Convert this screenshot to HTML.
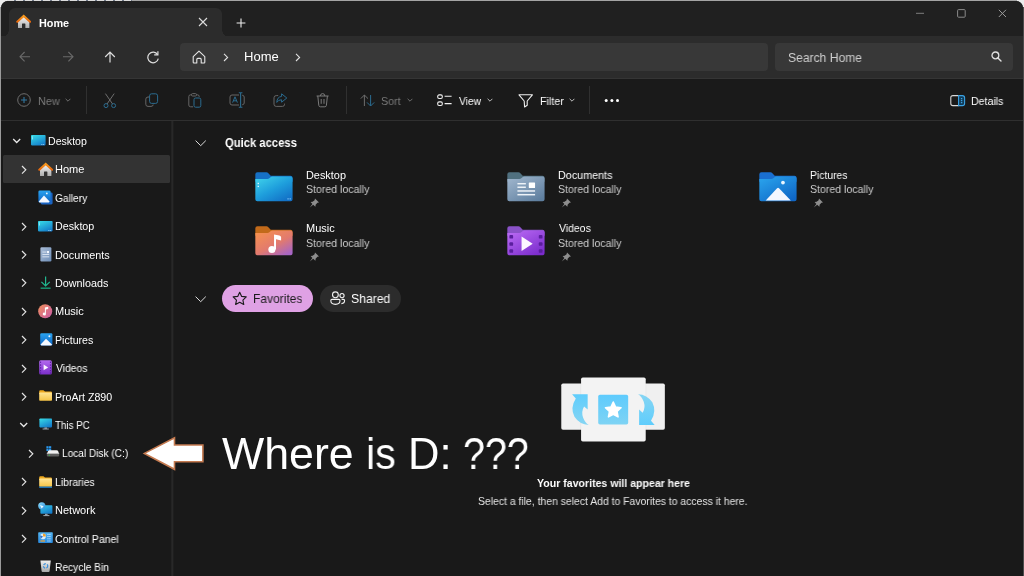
<!DOCTYPE html>
<html lang="en"><head><meta charset="utf-8"><title>Home - File Explorer</title>
<style>

*{margin:0;padding:0;box-sizing:border-box}
html,body{width:1024px;height:576px;overflow:hidden;background:#ececec;font-family:"Liberation Sans",sans-serif}
.abs,.t,svg.i{position:absolute}
.t{will-change:transform;white-space:nowrap;line-height:1em;display:block;transform-origin:0 0}
#win{position:absolute;left:1px;top:1px;width:1022px;height:590px;background:#191919;border-radius:7px 7px 0 0;overflow:hidden}
#titlebar{position:absolute;left:0;top:0;width:1022px;height:35px;background:#202020}
#tab{position:absolute;left:8px;top:7px;width:213px;height:29px;background:#2c2c2c;border-radius:6px 6px 0 0}
#tab:before,#tab:after{content:"";position:absolute;bottom:0;width:7px;height:7px}
#tab:before{left:-7px;background:radial-gradient(circle at 0 0,transparent 6.5px,#2c2c2c 7px)}
#tab:after{right:-7px;background:radial-gradient(circle at 100% 0,transparent 6.5px,#2c2c2c 7px)}
#nav{position:absolute;left:0;top:35px;width:1022px;height:43px;background:#2c2c2c;border-bottom:1px solid #353535}
#addr{position:absolute;left:179px;top:42px;width:588px;height:28px;background:#383838;border-radius:4px}
#search{position:absolute;left:774px;top:42px;width:238px;height:28px;background:#383838;border-radius:4px}
#toolbar{position:absolute;left:0;top:78px;width:1022px;height:42px;background:#1a1a1a;border-bottom:1px solid #2f2f2f}
.sep{position:absolute;top:85px;width:1px;height:28px;background:#303030}
#side{position:absolute;left:0;top:120px;width:170px;height:470px;background:#191919}
#div{position:absolute;left:170px;top:120px;width:3px;height:470px;background:linear-gradient(90deg,#232323 0,#232323 1px,#282828 1px,#282828 2px,#1e1e1e 2px)}
#sel{position:absolute;left:2.3px;top:154px;width:166.7px;height:27.8px;background:#333;border-radius:1.5px}
.pill{position:absolute;top:283.8px;height:27.5px;border-radius:14px}
#edgeL{position:absolute;left:0;top:7px;width:1px;height:569px;background:#9b9b9b}
#edgeT{position:absolute;left:7px;top:0;width:1010px;height:1px;background:linear-gradient(90deg,rgba(0,0,0,0) 0,rgba(0,0,0,0) 125px,#a4a4a4 125px),repeating-linear-gradient(90deg,#dcdcdc 0,#dcdcdc 7px,#6d7686 7px,#6d7686 9px)}
#edgeR{position:absolute;left:1023px;top:7px;width:1px;height:569px;background:#4c4c4c}

</style></head>
<body>
<div id="win">
<div id="titlebar"></div><div id="tab"></div><div id="nav"></div>
<div id="addr"></div><div id="search"></div>
<div id="toolbar"></div>
<div class="sep" style="left:85px"></div><div class="sep" style="left:345px"></div><div class="sep" style="left:588px"></div>
<div id="side"></div><div id="div"></div><div id="sel"></div>
<div class="pill" style="left:220.5px;width:91.7px;background:#dfa1e4"></div>
<div class="pill" style="left:319px;width:81.2px;background:#2c2c2c"></div>
</div>
<div id="edgeL"></div><div id="edgeT"></div><div id="edgeR"></div>
<div id="icons">
<svg class="i" style="left:16px;top:14px" width="15.4" height="15.0" viewBox="0 0 15.4 15" ><defs><linearGradient id="hg174" x1="0" y1="0" x2="0" y2="1"><stop offset="0" stop-color="#f4f4f4"/><stop offset="1" stop-color="#adadad"/></linearGradient><linearGradient id="hr174" x1="0" y1="0" x2="0" y2="1"><stop offset="0" stop-color="#f79a1e"/><stop offset="1" stop-color="#e9680c"/></linearGradient></defs><path d="M2 7.4 L7.7 2.4 L13.4 7.4 V13.5 Q13.4 14.1 12.8 14.1 H9.4 V9.9 Q9.4 9.4 8.9 9.4 H6.5 Q6 9.4 6 9.9 V14.1 H2.6 Q2 14.1 2 13.5 Z" fill="url(#hg174)"/><path d="M1.3 7.7 L7.7 1.9 L14.1 7.7" fill="none" stroke="url(#hr174)" stroke-width="2.1" stroke-linecap="round" stroke-linejoin="miter"/></svg>
<svg class="i" style="left:198px;top:17px" width="10" height="10" viewBox="0 0 10 10" ><path d="M1 1 L9 9 M9 1 L1 9" stroke="#dcdcdc" stroke-width="1.1" fill="none"/></svg>
<svg class="i" style="left:236px;top:18px" width="10" height="10" viewBox="0 0 10 10" ><path d="M5 0.6 V9.4 M0.6 5 H9.4" stroke="#ededed" stroke-width="1.1" fill="none"/></svg>
<svg class="i" style="left:916px;top:12px" width="9" height="3" viewBox="0 0 9 3" ><path d="M0 1.3 H8" stroke="#7d7d7d" stroke-width="1"/></svg>
<svg class="i" style="left:957px;top:9px" width="9" height="9" viewBox="0 0 9 9" ><rect x="0.6" y="0.6" width="7.6" height="7.6" rx="0.9" fill="none" stroke="#8a8a8a" stroke-width="1"/></svg>
<svg class="i" style="left:998px;top:9px" width="9" height="9" viewBox="0 0 9 9" ><path d="M0.8 0.8 L8 8 M8 0.8 L0.8 8" stroke="#9a9a9a" stroke-width="1" fill="none"/></svg>
<svg class="i" style="left:19px;top:51px" width="12" height="12" viewBox="0 0 12 12" ><path d="M11 5.7 H1.2 M5.6 1 L1 5.7 L5.6 10.4" fill="none" stroke="#6a6a6a" stroke-width="1.1"/></svg>
<svg class="i" style="left:62px;top:51px" width="12" height="12" viewBox="0 0 12 12" ><path d="M1 5.7 H10.8 M6.4 1 L11 5.7 L6.4 10.4" fill="none" stroke="#6a6a6a" stroke-width="1.1"/></svg>
<svg class="i" style="left:104px;top:51px" width="12" height="12" viewBox="0 0 12 12" ><path d="M6 11.4 V1.4 M1.2 6 L6 1.2 L10.8 6" fill="none" stroke="#dedede" stroke-width="1.2"/></svg>
<svg class="i" style="left:146px;top:50px" width="14" height="14" viewBox="0 0 14 14" ><path d="M11.6 4.6 A5.3 5.3 0 1 0 12.3 8.6" fill="none" stroke="#dedede" stroke-width="1.2"/><path d="M11.9 1.2 V4.9 H8.2" fill="none" stroke="#dedede" stroke-width="1.2"/></svg>
<svg class="i" style="left:192px;top:50px" width="14" height="14" viewBox="0 0 14 14" ><path d="M1.2 6.6 L7 1.2 L12.8 6.6 V12.2 Q12.8 13 12 13 H9.2 V9.4 Q9.2 8.4 8.2 8.4 H5.8 Q4.8 8.4 4.8 9.4 V13 H2 Q1.2 13 1.2 12.2 Z" fill="none" stroke="#e6e6e6" stroke-width="1.1" stroke-linejoin="round"/></svg>
<svg class="i" style="left:223px;top:53px" width="6" height="9" viewBox="0 0 6 9" ><path d="M1 0.8 L4.6 4.4 L1 8" fill="none" stroke="#e2e2e2" stroke-width="1.1"/></svg>
<svg class="i" style="left:295px;top:53px" width="6" height="9" viewBox="0 0 6 9" ><path d="M1 0.8 L4.6 4.4 L1 8" fill="none" stroke="#e2e2e2" stroke-width="1.1"/></svg>
<svg class="i" style="left:991px;top:51px" width="11" height="11" viewBox="0 0 11 11" ><circle cx="4.4" cy="4.4" r="3.4" fill="none" stroke="#e0e0e0" stroke-width="1.3"/><path d="M6.9 6.9 L10 10" stroke="#e0e0e0" stroke-width="1.4" stroke-linecap="round"/></svg>
<svg class="i" style="left:17px;top:93px" width="14" height="14" viewBox="0 0 14 14" ><circle cx="7" cy="7" r="6.3" fill="none" stroke="#6e6e6e" stroke-width="1"/><path d="M7 4 V10 M4 7 H10" stroke="#3277a0" stroke-width="1.1"/></svg>
<svg class="i" style="left:65px;top:98px" width="6" height="5" viewBox="0 0 6 5" ><path d="M0.6 0.8 L3 3.2 L5.4 0.8" fill="none" stroke="#6e6e6e" stroke-width="1"/></svg>
<svg class="i" style="left:103px;top:93px" width="14" height="16" viewBox="0 0 14 16" ><path d="M2.4 0.6 L9.6 11 M11.2 0.6 L4 11" stroke="#6e6e6e" stroke-width="1" fill="none"/><circle cx="3" cy="12.6" r="2" fill="none" stroke="#2b6c90" stroke-width="1"/><circle cx="10.6" cy="12.6" r="2" fill="none" stroke="#2b6c90" stroke-width="1"/></svg>
<svg class="i" style="left:145px;top:93px" width="14" height="15" viewBox="0 0 14 15" ><path d="M4.4 4 H3 Q0.8 4 0.8 6.2 V11.2 Q0.8 13.4 3 13.4 H6 Q8.2 13.4 8.2 11.6" fill="none" stroke="#666" stroke-width="1"/><rect x="4.6" y="0.8" width="8" height="9.6" rx="2" fill="none" stroke="#2b6c90" stroke-width="1"/></svg>
<svg class="i" style="left:188px;top:93px" width="14" height="16" viewBox="0 0 14 16" ><path d="M5 13.8 H2.6 Q0.8 13.8 0.8 12 V3.6 Q0.8 1.8 2.6 1.8 H3.4 M8.6 1.8 H9.4 Q11.2 1.8 11.2 3.6 V4" fill="none" stroke="#666" stroke-width="1"/><rect x="3.4" y="0.6" width="5.2" height="2.4" rx="1.2" fill="none" stroke="#666" stroke-width="1"/><rect x="6" y="5" width="6.8" height="9.2" rx="1.6" fill="none" stroke="#2b6c90" stroke-width="1"/></svg>
<svg class="i" style="left:229px;top:92px" width="16" height="16" viewBox="0 0 16 16" ><path d="M10 3 H3 Q1 3 1 5 V11 Q1 13 3 13 H10 M13.2 3.2 Q15.2 3.4 15.2 5 V11 Q15.2 12.6 13.2 12.8" fill="none" stroke="#666" stroke-width="1"/><path d="M11.6 0.8 V15.2 M9.8 0.8 H13.4 M9.8 15.2 H13.4" stroke="#2b6c90" stroke-width="1.1" fill="none"/><path d="M3.6 10.6 L6 4.8 L8.4 10.6 M4.4 8.8 H7.6" stroke="#2b6c90" stroke-width="1" fill="none"/></svg>
<svg class="i" style="left:273px;top:93px" width="15" height="15" viewBox="0 0 15 15" ><path d="M5.2 2.6 H3.2 Q1 2.6 1 4.8 V11.2 Q1 13.4 3.2 13.4 H9.4 Q11.6 13.4 11.6 11.2 V10.6" fill="none" stroke="#666" stroke-width="1"/><path d="M8.6 0.8 L13.8 5 L8.6 9.2 V6.8 Q5.4 6.6 3.8 9.4 Q4 4 8.6 3.4 Z" fill="none" stroke="#2b6c90" stroke-width="1" stroke-linejoin="round"/></svg>
<svg class="i" style="left:316px;top:93px" width="14" height="15" viewBox="0 0 14 15" ><path d="M0.6 3 H12.6 M4.4 3 Q4.4 0.6 6.6 0.6 Q8.8 0.6 8.8 3 M1.8 3 L2.8 12.4 Q3 13.8 4.4 13.8 H8.8 Q10.2 13.8 10.4 12.4 L11.4 3 M5.2 6 V10.8 M8 6 V10.8" fill="none" stroke="#7a7a7a" stroke-width="1"/></svg>
<svg class="i" style="left:360px;top:94px" width="16" height="13" viewBox="0 0 16 13" ><path d="M4.4 12 V1 M0.8 4.6 L4.4 1 L8 4.6" fill="none" stroke="#6e6e6e" stroke-width="1"/><path d="M10.6 1 V12 M7 8.4 L10.6 12 L14.2 8.4" fill="none" stroke="#2b6c90" stroke-width="1"/></svg>
<svg class="i" style="left:407px;top:98px" width="6" height="5" viewBox="0 0 6 5" ><path d="M0.6 0.8 L3 3.2 L5.4 0.8" fill="none" stroke="#6e6e6e" stroke-width="1"/></svg>
<svg class="i" style="left:437px;top:94px" width="16" height="13" viewBox="0 0 16 13" ><rect x="0.7" y="0.9" width="4.6" height="3.6" rx="1.4" fill="none" stroke="#f0f0f0" stroke-width="1.1"/><rect x="0.7" y="7.9" width="4.6" height="3.6" rx="1.4" fill="none" stroke="#f0f0f0" stroke-width="1.1"/><path d="M7.6 2.2 H14.6 M7.6 9.6 H14.6" stroke="#f0f0f0" stroke-width="1.1"/></svg>
<svg class="i" style="left:487px;top:98px" width="6" height="5" viewBox="0 0 6 5" ><path d="M0.6 0.8 L3 3.2 L5.4 0.8" fill="none" stroke="#bdbdbd" stroke-width="1"/></svg>
<svg class="i" style="left:518px;top:94px" width="16" height="14" viewBox="0 0 16 14" ><path d="M1 0.8 H14.4 L9.2 7 V11.2 L6.6 13 L6.2 7 Z" fill="none" stroke="#f0f0f0" stroke-width="1.1" stroke-linejoin="round"/></svg>
<svg class="i" style="left:569px;top:98px" width="6" height="5" viewBox="0 0 6 5" ><path d="M0.6 0.8 L3 3.2 L5.4 0.8" fill="none" stroke="#bdbdbd" stroke-width="1"/></svg>
<svg class="i" style="left:604px;top:99px" width="16" height="4" viewBox="0 0 16 4" ><circle cx="2.2" cy="1.6" r="1.5" fill="#fff"/><circle cx="7.9" cy="1.6" r="1.5" fill="#fff"/><circle cx="13.5" cy="1.6" r="1.5" fill="#fff"/></svg>
<svg class="i" style="left:950px;top:95px" width="16" height="12" viewBox="0 0 16 12" ><path d="M8.6 0.6 H3 Q0.8 0.6 0.8 2.8 V8.4 Q0.8 10.6 3 10.6 H8.6" fill="none" stroke="#d8d8d8" stroke-width="1.1"/><path d="M8.6 0.6 H12.4 Q14.6 0.6 14.6 2.8 V8.4 Q14.6 10.6 12.4 10.6 H8.6 Z" fill="#123a55" stroke="#3aa2e4" stroke-width="1.1"/><path d="M11.6 3 V8.2" stroke="#3aa2e4" stroke-width="1.4" stroke-dasharray="1.2 0.8"/></svg>
<svg class="i" style="left:12px;top:137.6px" width="10" height="6" viewBox="0 0 10 6" ><path d="M1.2 1 L4.7 4.5 L8.2 1" fill="none" stroke="#e8e8e8" stroke-width="1.3"/></svg>
<svg class="i" style="left:21px;top:164.8px" width="6" height="10" viewBox="0 0 6 10" ><path d="M1 1 L4.8 4.8 L1 8.6" fill="none" stroke="#e4e4e4" stroke-width="1.2"/></svg>
<svg class="i" style="left:21px;top:221.6px" width="6" height="10" viewBox="0 0 6 10" ><path d="M1 1 L4.8 4.8 L1 8.6" fill="none" stroke="#e4e4e4" stroke-width="1.2"/></svg>
<svg class="i" style="left:21px;top:250.0px" width="6" height="10" viewBox="0 0 6 10" ><path d="M1 1 L4.8 4.8 L1 8.6" fill="none" stroke="#e4e4e4" stroke-width="1.2"/></svg>
<svg class="i" style="left:21px;top:278.4px" width="6" height="10" viewBox="0 0 6 10" ><path d="M1 1 L4.8 4.8 L1 8.6" fill="none" stroke="#e4e4e4" stroke-width="1.2"/></svg>
<svg class="i" style="left:21px;top:306.79999999999995px" width="6" height="10" viewBox="0 0 6 10" ><path d="M1 1 L4.8 4.8 L1 8.6" fill="none" stroke="#e4e4e4" stroke-width="1.2"/></svg>
<svg class="i" style="left:21px;top:335.19999999999993px" width="6" height="10" viewBox="0 0 6 10" ><path d="M1 1 L4.8 4.8 L1 8.6" fill="none" stroke="#e4e4e4" stroke-width="1.2"/></svg>
<svg class="i" style="left:21px;top:363.59999999999997px" width="6" height="10" viewBox="0 0 6 10" ><path d="M1 1 L4.8 4.8 L1 8.6" fill="none" stroke="#e4e4e4" stroke-width="1.2"/></svg>
<svg class="i" style="left:21px;top:392.0px" width="6" height="10" viewBox="0 0 6 10" ><path d="M1 1 L4.8 4.8 L1 8.6" fill="none" stroke="#e4e4e4" stroke-width="1.2"/></svg>
<svg class="i" style="left:21px;top:477.19999999999993px" width="6" height="10" viewBox="0 0 6 10" ><path d="M1 1 L4.8 4.8 L1 8.6" fill="none" stroke="#e4e4e4" stroke-width="1.2"/></svg>
<svg class="i" style="left:21px;top:505.59999999999997px" width="6" height="10" viewBox="0 0 6 10" ><path d="M1 1 L4.8 4.8 L1 8.6" fill="none" stroke="#e4e4e4" stroke-width="1.2"/></svg>
<svg class="i" style="left:21px;top:533.9999999999999px" width="6" height="10" viewBox="0 0 6 10" ><path d="M1 1 L4.8 4.8 L1 8.6" fill="none" stroke="#e4e4e4" stroke-width="1.2"/></svg>
<svg class="i" style="left:18.8px;top:422.0px" width="10" height="6" viewBox="0 0 10 6" ><path d="M1.2 1 L4.7 4.5 L8.2 1" fill="none" stroke="#e8e8e8" stroke-width="1.3"/></svg>
<svg class="i" style="left:28px;top:448.79999999999995px" width="6" height="10" viewBox="0 0 6 10" ><path d="M1 1 L4.8 4.8 L1 8.6" fill="none" stroke="#e4e4e4" stroke-width="1.2"/></svg>
<svg class="i" style="left:31px;top:134.8px" width="15" height="11" viewBox="0 0 15 11" ><defs><linearGradient id="g1" x1="0.2" y1="0" x2="0.8" y2="1"><stop offset="0" stop-color="#35d6e6"/><stop offset="1" stop-color="#1277c8"/></linearGradient></defs><rect x="0" y="0" width="14.6" height="10.4" rx="0.8" fill="url(#g1)"/><rect x="1" y="1.6" width="0.9" height="0.9" fill="#dff"/><rect x="1" y="3.4" width="0.9" height="0.9" fill="#dff"/><rect x="10.4" y="9.2" width="1" height="0.8" fill="#bfe9ff"/><rect x="12.2" y="9.2" width="1" height="0.8" fill="#bfe9ff"/></svg>
<svg class="i" style="left:38px;top:161.6px" width="15.4" height="15.0" viewBox="0 0 15.4 15" ><defs><linearGradient id="hg541" x1="0" y1="0" x2="0" y2="1"><stop offset="0" stop-color="#f4f4f4"/><stop offset="1" stop-color="#adadad"/></linearGradient><linearGradient id="hr541" x1="0" y1="0" x2="0" y2="1"><stop offset="0" stop-color="#f79a1e"/><stop offset="1" stop-color="#e9680c"/></linearGradient></defs><path d="M2 7.4 L7.7 2.4 L13.4 7.4 V13.5 Q13.4 14.1 12.8 14.1 H9.4 V9.9 Q9.4 9.4 8.9 9.4 H6.5 Q6 9.4 6 9.9 V14.1 H2.6 Q2 14.1 2 13.5 Z" fill="url(#hg541)"/><path d="M1.3 7.7 L7.7 1.9 L14.1 7.7" fill="none" stroke="url(#hr541)" stroke-width="2.1" stroke-linecap="round" stroke-linejoin="miter"/></svg>
<svg class="i" style="left:38px;top:190px" width="15" height="15" viewBox="0 0 15 15" ><defs><linearGradient id="g2" x1="0" y1="0" x2="0" y2="1"><stop offset="0" stop-color="#2aa4f0"/><stop offset="1" stop-color="#0d63c4"/></linearGradient></defs><rect x="2.6" y="2.4" width="12" height="12" rx="1.4" fill="#1a62c0"/><rect x="0.4" y="0.4" width="12.2" height="12.2" rx="1.4" fill="url(#g2)"/><path d="M0.8 11.6 L6 5.6 L11.6 11.6 Q11.6 12.4 10.8 12.4 H1.6 Q0.8 12.4 0.8 11.6 Z" fill="#f4f8ff"/><circle cx="8.8" cy="3.4" r="0.9" fill="#e9f6ff"/></svg>
<svg class="i" style="left:38px;top:220.5px" width="15" height="11" viewBox="0 0 15 11" ><defs><linearGradient id="g3" x1="0.2" y1="0" x2="0.8" y2="1"><stop offset="0" stop-color="#35d6e6"/><stop offset="1" stop-color="#1277c8"/></linearGradient></defs><rect x="0" y="0" width="14.6" height="10.4" rx="0.8" fill="url(#g3)"/><rect x="1" y="1.6" width="0.9" height="0.9" fill="#dff"/><rect x="1" y="3.4" width="0.9" height="0.9" fill="#dff"/><rect x="10.4" y="9.2" width="1" height="0.8" fill="#bfe9ff"/><rect x="12.2" y="9.2" width="1" height="0.8" fill="#bfe9ff"/></svg>
<svg class="i" style="left:39.5px;top:247px" width="12" height="15" viewBox="0 0 12 15" ><defs><linearGradient id="g4" x1="0" y1="0" x2="1" y2="1"><stop offset="0" stop-color="#a9bcd6"/><stop offset="1" stop-color="#6f8fb8"/></linearGradient></defs><rect x="0.4" y="0.2" width="11" height="14.2" rx="1.2" fill="url(#g4)"/><rect x="2.4" y="4.6" width="3.6" height="0.9" fill="#dfe8f4"/><rect x="6.8" y="4" width="2.2" height="2.2" fill="#f4f8ff"/><rect x="2.4" y="7" width="6.8" height="0.9" fill="#dfe8f4"/><rect x="2.4" y="9.4" width="6.8" height="0.9" fill="#dfe8f4"/></svg>
<svg class="i" style="left:40px;top:276px" width="12" height="14" viewBox="0 0 12 14" ><path d="M5.6 0.4 V9.8 M1.4 5.8 L5.6 10 L9.8 5.8" fill="none" stroke="#21b890" stroke-width="1.2"/><path d="M0.6 12.2 H10.6" stroke="#17936f" stroke-width="1.5"/></svg>
<svg class="i" style="left:38px;top:304px" width="15" height="15" viewBox="0 0 15 15" ><defs><linearGradient id="g5" x1="0" y1="0" x2="1" y2="1"><stop offset="0" stop-color="#f0905a"/><stop offset="1" stop-color="#c95aa8"/></linearGradient></defs><circle cx="7.2" cy="7.2" r="7" fill="url(#g5)"/><path d="M6.9 9.9 V3.4 L10.2 2.8 V5 L7.9 5.5 V9.9 A1.6 1.5 0 1 1 6.9 8.7" fill="#fff"/></svg>
<svg class="i" style="left:39.5px;top:332.5px" width="13" height="13" viewBox="0 0 13 13" ><defs><linearGradient id="g6" x1="0" y1="0" x2="0" y2="1"><stop offset="0" stop-color="#2aa4f0"/><stop offset="1" stop-color="#0d63c4"/></linearGradient></defs><rect x="0.2" y="0.2" width="12.2" height="12.4" rx="1.3" fill="url(#g6)"/><path d="M0.6 11.6 L6 5.8 L12 11.6 Q12 12.4 11.2 12.4 H1.4 Q0.6 12.4 0.6 11.6 Z" fill="#f4f8ff"/><circle cx="9.4" cy="3.2" r="1" fill="#e9f6ff"/></svg>
<svg class="i" style="left:39px;top:360px" width="13" height="15" viewBox="0 0 13 15" ><defs><linearGradient id="g7" x1="0" y1="0" x2="0" y2="1"><stop offset="0" stop-color="#b46af0"/><stop offset="1" stop-color="#7a2ec8"/></linearGradient></defs><rect x="0.2" y="0.2" width="12.6" height="14.4" rx="1.5" fill="url(#g7)"/><path d="M4.6 4.6 L9.2 7.4 L4.6 10.2 Z" fill="#fbf4ff"/><rect x="1" y="1.6" width="1.1" height="1.3" fill="#5a1e9e"/><rect x="1" y="4.4" width="1.1" height="1.3" fill="#5a1e9e"/><rect x="1" y="7.2" width="1.1" height="1.3" fill="#5a1e9e"/><rect x="1" y="10" width="1.1" height="1.3" fill="#5a1e9e"/><rect x="1" y="12.4" width="1.1" height="1.3" fill="#5a1e9e"/><rect x="10.9" y="1.6" width="1.1" height="1.3" fill="#5a1e9e"/><rect x="10.9" y="4.4" width="1.1" height="1.3" fill="#5a1e9e"/><rect x="10.9" y="7.2" width="1.1" height="1.3" fill="#5a1e9e"/><rect x="10.9" y="10" width="1.1" height="1.3" fill="#5a1e9e"/><rect x="10.9" y="12.4" width="1.1" height="1.3" fill="#5a1e9e"/></svg>
<svg class="i" style="left:39px;top:390px" width="14" height="12" viewBox="0 0 14 12" ><defs><linearGradient id="g8" x1="0" y1="0" x2="0" y2="1"><stop offset="0" stop-color="#ffe494"/><stop offset="1" stop-color="#f6c445"/></linearGradient></defs><path d="M0.2 1.4 Q0.2 0.2 1.4 0.2 H4.4 L6 1.6 H11.8 Q13 1.6 13 2.8 V4 H0.2 Z" fill="#f0aa1e"/><rect x="0.2" y="2.6" width="12.8" height="8.2" rx="0.8" fill="url(#g8)"/></svg>
<svg class="i" style="left:39px;top:418px" width="14" height="13" viewBox="0 0 14 13" ><defs><linearGradient id="g9" x1="0.2" y1="0" x2="0.8" y2="1"><stop offset="0" stop-color="#35d6e6"/><stop offset="1" stop-color="#1277c8"/></linearGradient></defs><rect x="0.4" y="0.4" width="12.6" height="9" rx="0.8" fill="url(#g9)"/><path d="M5.4 9.4 H8 V10.8 H5.4 Z" fill="#8c98a4"/><path d="M3.6 11 H9.8" stroke="#aeb8c2" stroke-width="0.9"/></svg>
<svg class="i" style="left:45.5px;top:446px" width="14" height="11" viewBox="0 0 14 11" ><rect x="0.4" y="0.2" width="2.2" height="2.2" fill="#2a98ee"/><rect x="3" y="0.2" width="2.2" height="2.2" fill="#2a98ee"/><rect x="0.4" y="2.8" width="2.2" height="2.2" fill="#2a98ee"/><rect x="3" y="2.8" width="2.2" height="2.2" fill="#2a98ee"/><path d="M2 5.2 Q2.4 4.2 3.6 4.2 H10.6 Q11.8 4.2 12.2 5.2 L13 7.4 H1 Z" fill="#f1f1f1"/><rect x="0.8" y="7.2" width="12.4" height="3.2" rx="0.8" fill="#5e5e5e"/><rect x="0.8" y="7" width="12.4" height="0.9" fill="#c4c4c4"/><rect x="2.6" y="8.8" width="1.4" height="0.8" fill="#38c048"/></svg>
<svg class="i" style="left:39px;top:476px" width="14" height="12" viewBox="0 0 14 12" ><defs><linearGradient id="g10" x1="0" y1="0" x2="0" y2="1"><stop offset="0" stop-color="#ffe494"/><stop offset="1" stop-color="#f6c445"/></linearGradient></defs><path d="M0.2 1.4 Q0.2 0.2 1.4 0.2 H4.4 L6 1.6 H11.8 Q13 1.6 13 2.8 V4 H0.2 Z" fill="#f0aa1e"/><rect x="0.2" y="2.6" width="12.8" height="8.2" rx="0.8" fill="url(#g10)"/><rect x="0.2" y="10.6" width="12.8" height="1.2" fill="#2488d8"/></svg>
<svg class="i" style="left:38px;top:502px" width="15" height="15" viewBox="0 0 15 15" ><defs><linearGradient id="g11" x1="0.2" y1="0" x2="0.8" y2="1"><stop offset="0" stop-color="#35c6e6"/><stop offset="1" stop-color="#1277c8"/></linearGradient><linearGradient id="g12" x1="0" y1="0" x2="1" y2="1"><stop offset="0" stop-color="#8fe0ff"/><stop offset="1" stop-color="#2a8ad8"/></linearGradient></defs><rect x="2.4" y="3.2" width="12" height="8.6" rx="0.8" fill="url(#g11)"/><path d="M7 11.8 H9.6 V13.2 H7 Z" fill="#8c98a4"/><path d="M5.4 13.6 H11.4" stroke="#aeb8c2" stroke-width="0.9"/><circle cx="3.8" cy="3.8" r="3.6" fill="url(#g12)"/><path d="M2 3 L5.6 4.2 L3.6 6.4 Z" fill="#e8fbff"/></svg>
<svg class="i" style="left:38px;top:532px" width="15" height="12" viewBox="0 0 15 12" ><defs><linearGradient id="g13" x1="0" y1="0" x2="0" y2="1"><stop offset="0" stop-color="#52b4f0"/><stop offset="1" stop-color="#2a8ade"/></linearGradient></defs><rect x="0.2" y="0.2" width="14.6" height="10.8" rx="0.8" fill="url(#g13)"/><circle cx="5" cy="4.4" r="2.8" fill="#d8ecfa"/><path d="M5 4.4 V1.6 A2.8 2.8 0 0 1 7.8 4.4 Z" fill="#f2a02a"/><path d="M5 4.4 L3 6.4 A2.8 2.8 0 0 1 2.4 3.2 Z" fill="#2a70c8"/><rect x="2.4" y="8.4" width="4.6" height="1.2" fill="#f2a02a"/><path d="M9.4 2.4 H13 M9.4 4.6 H13 M9.4 6.8 H13 M9.4 9 H13" stroke="#dff0ff" stroke-width="0.9" stroke-dasharray="1.2 0.7"/></svg>
<svg class="i" style="left:40px;top:560px" width="12" height="13" viewBox="0 0 12 13" ><defs><linearGradient id="g14" x1="0" y1="0" x2="0" y2="1"><stop offset="0" stop-color="#f0f0f0"/><stop offset="1" stop-color="#a8a8a8"/></linearGradient></defs><path d="M0.4 0.4 H10.8 L9.6 11 Q9.5 12 8.6 12 H2.6 Q1.7 12 1.6 11 Z" fill="url(#g14)"/><circle cx="5.6" cy="6" r="2.2" fill="none" stroke="#2a8ae0" stroke-width="1.1" stroke-dasharray="2.4 1.2"/></svg>
<svg class="i" style="left:194.5px;top:139.8px" width="12" height="7" viewBox="0 0 12 7" ><path d="M0.6 0.6 L5.7 5.7 L10.8 0.6" fill="none" stroke="#dcdcdc" stroke-width="1"/></svg>
<svg class="i" style="left:194.5px;top:295.6px" width="12" height="7" viewBox="0 0 12 7" ><path d="M0.6 0.6 L5.7 5.7 L10.8 0.6" fill="none" stroke="#dcdcdc" stroke-width="1"/></svg>
<svg class="i" style="left:255.2px;top:171.9px" width="38.3" height="30.4" viewBox="0 0 39 31" ><defs><linearGradient id="g15" x1="0" y1="0" x2="0.8" y2="1"><stop offset="0" stop-color="#42d6ec"/><stop offset="0.55" stop-color="#1e9edc"/><stop offset="1" stop-color="#1270c6"/></linearGradient></defs><path d="M0.3 2.4 Q0.3 0.3 2.4 0.3 H11.6 Q12.8 0.3 13.6 1.2 L16 3.8 H36.2 Q38.3 3.8 38.3 5.9 V10 H0.3 Z" fill="#1670c4"/><path d="M0.3 7.2 H12.6 Q13.8 7.2 14.6 6.4 L15.8 5.4 Q16.6 4.6 17.8 4.6 H36.2 Q38.3 4.6 38.3 6.7 V27.8 Q38.3 29.9 36.2 29.9 H2.4 Q0.3 29.9 0.3 27.8 Z" fill="url(#g15)"/><rect x="2.6" y="11" width="1.4" height="1.4" fill="#dff8ff"/><rect x="2.6" y="14" width="1.4" height="1.4" fill="#dff8ff"/><rect x="33" y="27" width="1.4" height="0.9" fill="#9fdcff"/><rect x="35.2" y="27" width="1.4" height="0.9" fill="#9fdcff"/></svg>
<svg class="i" style="left:507.4px;top:171.9px" width="38.3" height="30.4" viewBox="0 0 39 31" ><defs><linearGradient id="g16" x1="0" y1="0" x2="0.8" y2="1"><stop offset="0" stop-color="#a2b8cf"/><stop offset="1" stop-color="#5f7f9f"/></linearGradient></defs><path d="M0.3 2.4 Q0.3 0.3 2.4 0.3 H11.6 Q12.8 0.3 13.6 1.2 L16 3.8 H36.2 Q38.3 3.8 38.3 5.9 V10 H0.3 Z" fill="#50707f"/><path d="M0.3 7.2 H12.6 Q13.8 7.2 14.6 6.4 L15.8 5.4 Q16.6 4.6 17.8 4.6 H36.2 Q38.3 4.6 38.3 6.7 V27.8 Q38.3 29.9 36.2 29.9 H2.4 Q0.3 29.9 0.3 27.8 Z" fill="url(#g16)"/><rect x="10.6" y="11.2" width="8.6" height="1.5" fill="#eef3f8"/><rect x="22.2" y="10.6" width="6.4" height="5.8" rx="0.6" fill="#fff"/><rect x="10.6" y="14.8" width="8.6" height="1.5" fill="#eef3f8"/><rect x="10.6" y="18.6" width="18" height="1.5" fill="#eef3f8"/><rect x="10.6" y="22.4" width="18" height="1.5" fill="#eef3f8"/></svg>
<svg class="i" style="left:759.4px;top:171.9px" width="38.3" height="30.4" viewBox="0 0 39 31" ><defs><linearGradient id="g17" x1="0" y1="0" x2="0.8" y2="1"><stop offset="0" stop-color="#2ba6ee"/><stop offset="1" stop-color="#0f66c6"/></linearGradient></defs><path d="M0.3 2.4 Q0.3 0.3 2.4 0.3 H11.6 Q12.8 0.3 13.6 1.2 L16 3.8 H36.2 Q38.3 3.8 38.3 5.9 V10 H0.3 Z" fill="#1a6fd0"/><path d="M0.3 7.2 H12.6 Q13.8 7.2 14.6 6.4 L15.8 5.4 Q16.6 4.6 17.8 4.6 H36.2 Q38.3 4.6 38.3 6.7 V27.8 Q38.3 29.9 36.2 29.9 H2.4 Q0.3 29.9 0.3 27.8 Z" fill="url(#g17)"/><path d="M6.8 29.1 L18.4 16.6 Q19.4 15.6 20.4 16.6 L32.4 29.1 Z" fill="#f4f7ff"/><circle cx="24.4" cy="10.8" r="1.9" fill="#eaf6ff"/></svg>
<svg class="i" style="left:255.2px;top:225.8px" width="38.3" height="30.4" viewBox="0 0 39 31" ><defs><linearGradient id="g18" x1="0" y1="0" x2="0.8" y2="1"><stop offset="0" stop-color="#f8944c"/><stop offset="0.6" stop-color="#e27a6e"/><stop offset="1" stop-color="#a866c4"/></linearGradient></defs><path d="M0.3 2.4 Q0.3 0.3 2.4 0.3 H11.6 Q12.8 0.3 13.6 1.2 L16 3.8 H36.2 Q38.3 3.8 38.3 5.9 V10 H0.3 Z" fill="#c26a1a"/><path d="M0.3 7.2 H12.6 Q13.8 7.2 14.6 6.4 L15.8 5.4 Q16.6 4.6 17.8 4.6 H36.2 Q38.3 4.6 38.3 6.7 V27.8 Q38.3 29.9 36.2 29.9 H2.4 Q0.3 29.9 0.3 27.8 Z" fill="url(#g18)"/><path d="M19.4 8.7 L24.8 9.6 Q26.6 10 26.6 11.6 V14.8 L21.4 13.4 V24 H19.4 Z" fill="#fff"/><circle cx="17.2" cy="24" r="3.6" fill="#fff"/></svg>
<svg class="i" style="left:507.4px;top:225.8px" width="38.3" height="30.4" viewBox="0 0 39 31" ><defs><linearGradient id="g19" x1="0" y1="0" x2="0.8" y2="1"><stop offset="0" stop-color="#bd6ef6"/><stop offset="1" stop-color="#7b2ccc"/></linearGradient></defs><path d="M0.3 2.4 Q0.3 0.3 2.4 0.3 H11.6 Q12.8 0.3 13.6 1.2 L16 3.8 H36.2 Q38.3 3.8 38.3 5.9 V10 H0.3 Z" fill="#8a52c8"/><path d="M0.3 7.2 H12.6 Q13.8 7.2 14.6 6.4 L15.8 5.4 Q16.6 4.6 17.8 4.6 H36.2 Q38.3 4.6 38.3 6.7 V27.8 Q38.3 29.9 36.2 29.9 H2.4 Q0.3 29.9 0.3 27.8 Z" fill="url(#g19)"/><path d="M14.8 10.8 L26.2 18.2 L14.8 25.6 Z" fill="#fdf6ff"/><rect x="2.4" y="9.2" width="3.8" height="3.6" rx="0.9" fill="#5a1e9e"/><rect x="2.4" y="16.6" width="3.8" height="3.6" rx="0.9" fill="#5a1e9e"/><rect x="2.4" y="23.8" width="3.8" height="3.6" rx="0.9" fill="#5a1e9e"/><rect x="32.4" y="9.2" width="3.8" height="3.6" rx="0.9" fill="#5a1e9e"/><rect x="32.4" y="16.6" width="3.8" height="3.6" rx="0.9" fill="#5a1e9e"/><rect x="32.4" y="23.8" width="3.8" height="3.6" rx="0.9" fill="#5a1e9e"/></svg>
<svg class="i" style="left:309px;top:197.6px" width="11" height="10" viewBox="0 0 11 10" ><path d="M6 0.6 L10 4.4 L8.4 4.8 L6.6 6.8 L6.4 8.8 L4.2 6.8 L0.8 9.6 L3.4 6 L1.6 4 L3.6 3.8 L5.6 2.2 Z" fill="#8e8e8e"/></svg>
<svg class="i" style="left:561px;top:197.6px" width="11" height="10" viewBox="0 0 11 10" ><path d="M6 0.6 L10 4.4 L8.4 4.8 L6.6 6.8 L6.4 8.8 L4.2 6.8 L0.8 9.6 L3.4 6 L1.6 4 L3.6 3.8 L5.6 2.2 Z" fill="#8e8e8e"/></svg>
<svg class="i" style="left:813px;top:197.6px" width="11" height="10" viewBox="0 0 11 10" ><path d="M6 0.6 L10 4.4 L8.4 4.8 L6.6 6.8 L6.4 8.8 L4.2 6.8 L0.8 9.6 L3.4 6 L1.6 4 L3.6 3.8 L5.6 2.2 Z" fill="#8e8e8e"/></svg>
<svg class="i" style="left:309px;top:251.6px" width="11" height="10" viewBox="0 0 11 10" ><path d="M6 0.6 L10 4.4 L8.4 4.8 L6.6 6.8 L6.4 8.8 L4.2 6.8 L0.8 9.6 L3.4 6 L1.6 4 L3.6 3.8 L5.6 2.2 Z" fill="#8e8e8e"/></svg>
<svg class="i" style="left:561px;top:251.6px" width="11" height="10" viewBox="0 0 11 10" ><path d="M6 0.6 L10 4.4 L8.4 4.8 L6.6 6.8 L6.4 8.8 L4.2 6.8 L0.8 9.6 L3.4 6 L1.6 4 L3.6 3.8 L5.6 2.2 Z" fill="#8e8e8e"/></svg>
<svg class="i" style="left:231.9px;top:291.2px" width="15.6" height="15.6" viewBox="0 0 15 15" ><path d="M7.4 1.2 L9.3 5.2 L13.7 5.7 L10.5 8.7 L11.3 13 L7.4 10.9 L3.5 13 L4.3 8.7 L1.1 5.7 L5.5 5.2 Z" fill="none" stroke="#1b1b1b" stroke-width="1.1" stroke-linejoin="round"/></svg>
<svg class="i" style="left:330px;top:291px" width="16" height="15" viewBox="0 0 16 15" ><circle cx="5.4" cy="3.8" r="2.9" fill="none" stroke="#f2f2f2" stroke-width="1.1"/><circle cx="12" cy="4.6" r="2.1" fill="none" stroke="#f2f2f2" stroke-width="1.1"/><path d="M0.8 9.6 Q0.8 8.4 2 8.4 H8.8 Q10 8.4 10 9.6 Q10 13.4 5.4 13.4 Q0.8 13.4 0.8 9.6 Z" fill="none" stroke="#f2f2f2" stroke-width="1.1"/><path d="M11.6 8.4 H13.4 Q14.6 8.4 14.6 9.6 Q14.6 12.6 11.4 12.6" fill="none" stroke="#f2f2f2" stroke-width="1.1"/></svg>
<svg class="i" style="left:140px;top:434px" width="66" height="40" viewBox="0 0 66 40" ><path d="M4.4 19.4 L34.5 3.9 V11 H62.9 V27.8 H34.5 V35.3 Z" fill="#fff" stroke="#c47a50" stroke-width="1.6" stroke-linejoin="miter"/></svg>
<svg class="i" style="left:556px;top:372px" width="114" height="76" viewBox="0 0 864 576" ><defs><linearGradient id="g20" x1="0" y1="0" x2="0" y2="1"><stop offset="0" stop-color="#5ecbfd"/><stop offset="1" stop-color="#7ed3f4"/></linearGradient><linearGradient id="g21" x1="0" y1="0" x2="0" y2="1"><stop offset="0" stop-color="#5fcdfc"/><stop offset="1" stop-color="#86d5f3"/></linearGradient><linearGradient id="g22" x1="0" y1="0" x2="0" y2="1"><stop offset="0" stop-color="#8ad5f1"/><stop offset="1" stop-color="#5cc9fd"/></linearGradient></defs><rect x="40" y="88" width="300" height="349" rx="13" fill="#f0f0f0"/><rect x="525" y="88" width="300" height="349" rx="13" fill="#f0f0f0"/><rect x="186" y="40" width="498" height="490" rx="14" fill="#000" opacity="0.06"/><rect x="190" y="42" width="490" height="485" rx="13" fill="#f3f3f3"/><rect x="320" y="172" width="227" height="225" rx="13" fill="url(#g20)"/><path d="M434.0 228.0 L451.6 265.7 L493.0 270.8 L462.5 299.3 L470.4 340.2 L434.0 320.0 L397.6 340.2 L405.5 299.3 L375.0 270.8 L416.4 265.7 Z" fill="#fff" stroke="#fff" stroke-width="12" stroke-linejoin="round"/><path d="M122 168 H240 V285 L213 262 Q190 300 205 345 Q220 385 248 402 Q180 400 140 340 Q105 270 150 200 Z" fill="url(#g21)"/><path d="M122 168 H240 V285 L213 262 Q190 300 205 345 Q220 385 248 402 Q180 400 140 340 Q105 270 150 200 Z" fill="url(#g21)" transform="rotate(180 435 285)"/></svg>
</div>
<div id="texts">
<span class="t" style="left:47.88px;top:136.00px;font-size:10.6px;transform:scaleX(0.9967);color:#fff">Desktop</span>
<span class="t" style="left:54.59px;top:164.00px;font-size:10.6px;transform:scaleX(1.0419);color:#fff">Home</span>
<span class="t" style="left:55.02px;top:193.00px;font-size:10.6px;transform:scaleX(0.9606);color:#fff">Gallery</span>
<span class="t" style="left:54.62px;top:221.00px;font-size:10.6px;transform:scaleX(1.0100);color:#fff">Desktop</span>
<span class="t" style="left:54.61px;top:250.00px;font-size:10.6px;transform:scaleX(1.0215);color:#fff">Documents</span>
<span class="t" style="left:54.61px;top:278.00px;font-size:10.6px;transform:scaleX(1.0171);color:#fff">Downloads</span>
<span class="t" style="left:54.59px;top:306.00px;font-size:10.6px;transform:scaleX(1.0415);color:#fff">Music</span>
<span class="t" style="left:54.63px;top:335.00px;font-size:10.6px;transform:scaleX(0.9946);color:#fff">Pictures</span>
<span class="t" style="left:55.50px;top:363.00px;font-size:10.6px;transform:scaleX(0.9757);color:#fff">Videos</span>
<span class="t" style="left:54.63px;top:392.00px;font-size:10.6px;transform:scaleX(0.9933);color:#fff">ProArt Z890</span>
<span class="t" style="left:55.27px;top:420.00px;font-size:10.6px;transform:scaleX(0.9216);color:#fff">This PC</span>
<span class="t" style="left:61.67px;top:448.00px;font-size:10.6px;transform:scaleX(0.9529);color:#fff">Local Disk (C:)</span>
<span class="t" style="left:54.64px;top:477.00px;font-size:10.6px;transform:scaleX(0.9778);color:#fff">Libraries</span>
<span class="t" style="left:54.59px;top:505.00px;font-size:10.6px;transform:scaleX(1.0395);color:#fff">Network</span>
<span class="t" style="left:55.00px;top:534.00px;font-size:10.6px;transform:scaleX(0.9921);color:#fff">Control Panel</span>
<span class="t" style="left:54.66px;top:562.00px;font-size:10.6px;transform:scaleX(0.9655);color:#fff">Recycle Bin</span>
<span class="t" style="left:39.00px;top:18.00px;font-size:10.8px;transform:scaleX(1.0043);color:#fff;font-weight:700">Home</span>
<span class="t" style="left:244.47px;top:51.00px;font-size:12.6px;transform:scaleX(1.0344);color:#fff">Home</span>
<span class="t" style="left:787.99px;top:52.00px;font-size:12.4px;transform:scaleX(0.9769);color:#cfcfcf">Search Home</span>
<span class="t" style="left:37.90px;top:96.00px;font-size:11.2px;transform:scaleX(0.9767);color:#7a7a7a">New</span>
<span class="t" style="left:381.42px;top:96.00px;font-size:11.2px;transform:scaleX(0.9550);color:#7a7a7a">Sort</span>
<span class="t" style="left:458.89px;top:96.00px;font-size:11.2px;transform:scaleX(0.9167);color:#fff">View</span>
<span class="t" style="left:539.76px;top:96.00px;font-size:11.2px;transform:scaleX(0.9592);color:#fff">Filter</span>
<span class="t" style="left:970.77px;top:96.00px;font-size:11.2px;transform:scaleX(0.9485);color:#fff">Details</span>
<span class="t" style="left:224.78px;top:138.00px;font-size:11.9px;transform:scaleX(0.9451);color:#fff;font-weight:700">Quick access</span>
<span class="t" style="left:305.63px;top:170.00px;font-size:10.9px;transform:scaleX(0.9968);color:#fff">Desktop</span>
<span class="t" style="left:306.01px;top:184.00px;font-size:10.9px;transform:scaleX(0.9711);color:#cdcdcd">Stored locally</span>
<span class="t" style="left:305.62px;top:223.00px;font-size:10.9px;transform:scaleX(1.0092);color:#fff">Music</span>
<span class="t" style="left:306.01px;top:238.00px;font-size:10.9px;transform:scaleX(0.9711);color:#cdcdcd">Stored locally</span>
<span class="t" style="left:557.64px;top:170.00px;font-size:10.9px;transform:scaleX(0.9884);color:#fff">Documents</span>
<span class="t" style="left:558.01px;top:184.00px;font-size:10.9px;transform:scaleX(0.9711);color:#cdcdcd">Stored locally</span>
<span class="t" style="left:558.50px;top:223.00px;font-size:10.9px;transform:scaleX(0.9618);color:#fff">Videos</span>
<span class="t" style="left:558.01px;top:238.00px;font-size:10.9px;transform:scaleX(0.9711);color:#cdcdcd">Stored locally</span>
<span class="t" style="left:809.92px;top:170.00px;font-size:10.9px;transform:scaleX(0.9508);color:#fff">Pictures</span>
<span class="t" style="left:810.26px;top:184.00px;font-size:10.9px;transform:scaleX(0.9711);color:#cdcdcd">Stored locally</span>
<span class="t" style="left:253.03px;top:293.00px;font-size:12.4px;transform:scaleX(0.9697);color:#1b1b1b">Favorites</span>
<span class="t" style="left:351.39px;top:293.00px;font-size:12.4px;transform:scaleX(0.9838);color:#fff">Shared</span>
<div id="callout">
<span class="t" style="left:222.40px;top:433.00px;font-size:43.6px;transform:scaleX(1.0261);color:#fff">Where</span>
<span class="t" style="left:365.97px;top:433.00px;font-size:43.6px;transform:scaleX(0.9444);color:#fff">is</span>
<span class="t" style="left:407.50px;top:433.00px;font-size:43.6px;transform:scaleX(1.0000);color:#fff">D:</span>
<span class="t" style="left:462.79px;top:433.00px;font-size:43.6px;transform:scaleX(0.9043);color:#fff">???</span>
</div>
<span class="t" style="left:536.50px;top:478.00px;font-size:10.6px;transform:scaleX(0.9967);color:#fff;font-weight:700">Your favorites will appear here</span>
<span class="t" style="left:478.26px;top:496.00px;font-size:10.6px;transform:scaleX(0.9822);color:#e4e4e4">Select a file, then select Add to Favorites to access it here.</span>
</div>
</body></html>
